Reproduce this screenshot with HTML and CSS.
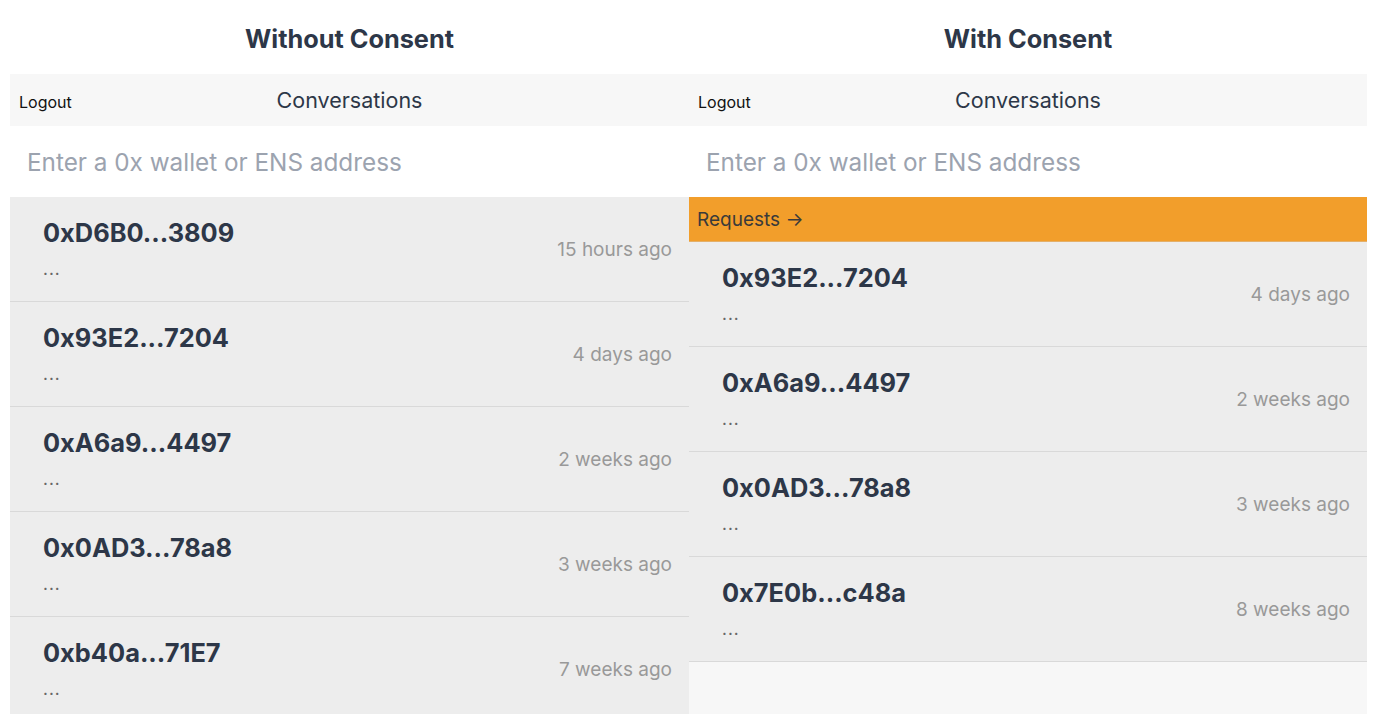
FILE: index.html
```html
<!DOCTYPE html>
<html lang="en">
<head>
<meta charset="utf-8">
<title>Consent comparison</title>
<link rel="stylesheet" href="styles.css">
</head>
<body>
<div class="page">
  <section class="column">
    <h2 class="title">Without Consent</h2>
    <div class="app">
      <div class="topbar">
        <span class="logout">Logout</span>
        <span class="topbar-title">Conversations</span>
        <span></span>
      </div>
      <input class="search" type="text" placeholder="Enter a 0x wallet or ENS address">
      <ul class="list">
        <li class="item"><div class="who"><div class="addr">0xD6B0...3809</div><div class="preview">...</div></div><div class="time">15 hours ago</div></li>
        <li class="item"><div class="who"><div class="addr">0x93E2...7204</div><div class="preview">...</div></div><div class="time">4 days ago</div></li>
        <li class="item"><div class="who"><div class="addr">0xA6a9...4497</div><div class="preview">...</div></div><div class="time">2 weeks ago</div></li>
        <li class="item"><div class="who"><div class="addr">0x0AD3...78a8</div><div class="preview">...</div></div><div class="time">3 weeks ago</div></li>
        <li class="item"><div class="who"><div class="addr">0xb40a...71E7</div><div class="preview">...</div></div><div class="time">7 weeks ago</div></li>
      </ul>
    </div>
  </section>
  <section class="column">
    <h2 class="title">With Consent</h2>
    <div class="app">
      <div class="topbar">
        <span class="logout">Logout</span>
        <span class="topbar-title">Conversations</span>
        <span></span>
      </div>
      <input class="search" type="text" placeholder="Enter a 0x wallet or ENS address">
      <div class="requests">Requests →</div>
      <ul class="list">
        <li class="item"><div class="who"><div class="addr">0x93E2...7204</div><div class="preview">...</div></div><div class="time">4 days ago</div></li>
        <li class="item"><div class="who"><div class="addr">0xA6a9...4497</div><div class="preview">...</div></div><div class="time">2 weeks ago</div></li>
        <li class="item"><div class="who"><div class="addr">0x0AD3...78a8</div><div class="preview">...</div></div><div class="time">3 weeks ago</div></li>
        <li class="item"><div class="who"><div class="addr">0x7E0b...c48a</div><div class="preview">...</div></div><div class="time">8 weeks ago</div></li>
      </ul>
    </div>
  </section>
</div>
</body>
</html>
```

FILE: styles.css
```css
* { box-sizing: border-box; }

html, body {
  margin: 0;
  padding: 0;
  background: #ffffff;
  font-family: Inter, "Noto Sans", "Liberation Sans", sans-serif;
  color: #2d3748;
}

.page {
  display: grid;
  grid-template-columns: 679px 678px;
  padding-left: 10px;
  height: 714px;
}

.column {
  display: flex;
  flex-direction: column;
  height: 714px;
  overflow: hidden;
}

.title {
  margin: 0;
  padding: 24px 0 20px;
  height: 74px;
  text-align: center;
  font-size: 25.3px;
  line-height: 30px;
  font-weight: 700;
  color: #2d3748;
}

.app {
  flex: 1;
  display: flex;
  flex-direction: column;
  background: #f7f7f7;
  overflow: hidden;
}

.topbar {
  height: 52px;
  flex: none;
  display: grid;
  grid-template-columns: 1fr auto 1fr;
  align-items: center;
  padding: 0 9px;
  background: #f7f7f7;
}

.logout {
  font-size: 16px;
  color: #111111;
  padding-top: 4px;
}

.topbar-title {
  font-size: 21.5px;
  color: #2d3748;
  padding-bottom: 1px;
}

.search {
  display: block;
  flex: none;
  width: 100%;
  height: 71px;
  margin: 0;
  border: none;
  outline: none;
  padding: 0 17px;
  background: #ffffff;
  font-family: inherit;
  font-size: 24.3px;
  color: #2d3748;
}

.search::placeholder {
  color: #9ca3af;
  opacity: 1;
}

.requests {
  flex: none;
  height: 45px;
  display: flex;
  align-items: center;
  padding: 0 8px;
  background: #f29e2b;
  color: #3a3a3a;
  font-size: 19px;
  border-bottom: 1px solid #e4b06a;
}

.list {
  list-style: none;
  margin: 0;
  padding: 0;
  flex: none;
}

.item {
  height: 105px;
  display: flex;
  justify-content: space-between;
  align-items: center;
  padding: 0 17px 0 33px;
  background: #ededed;
  border-bottom: 1px solid #d9d9d9;
}

.who {
  display: flex;
  flex-direction: column;
  gap: 9px;
}

.addr {
  font-size: 25.4px;
  line-height: 30px;
  font-weight: 700;
  color: #2d3748;
}

.preview {
  font-size: 17px;
  line-height: 24px;
  letter-spacing: 1px;
  color: #666666;
}

.time {
  font-size: 19px;
  color: #999999;
}
```
